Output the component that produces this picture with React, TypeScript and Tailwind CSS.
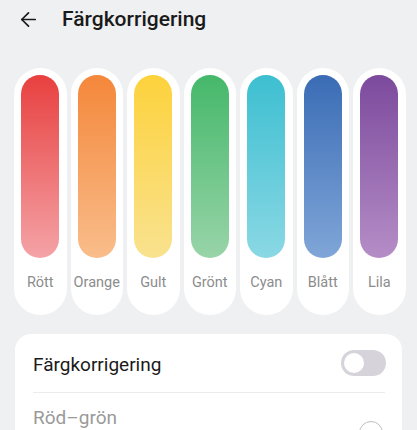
import { ArrowLeft } from "lucide-react";

const colors = [
  { name: "Rött", from: "#e8403f", to: "#f4a3a7" },
  { name: "Orange", from: "#f4873a", to: "#f9bd8b" },
  { name: "Gult", from: "#fdd23c", to: "#f9e28f" },
  { name: "Grönt", from: "#45b86a", to: "#98d4a9" },
  { name: "Cyan", from: "#3dbfd1", to: "#8ad8e4" },
  { name: "Blått", from: "#3a6cb5", to: "#80a6d8" },
  { name: "Lila", from: "#7c4a9d", to: "#b58dc6" },
];

export default function App() {
  return (
    <div
      className="w-[417px] h-[430px] overflow-hidden bg-[#eef0f2]"
      style={{ fontFamily: "Roboto, 'Noto Sans', sans-serif" }}
    >
      <header className="flex items-center h-[38px] pl-[17px] pt-[1px]">
        <ArrowLeft className="w-[23px] h-[23px] text-[#1a1a1a]" strokeWidth={1.8} />
        <h1 className="ml-[22px] text-[21px] font-medium text-[#1a1a1a]">
          Färgkorrigering
        </h1>
      </header>

      <div className="flex gap-[4px] pl-[14px] mt-[30px]">
        {colors.map((c) => (
          <div
            key={c.name}
            className="w-[52.5px] h-[247px] bg-white rounded-full flex flex-col items-center pt-[7px]"
          >
            <div
              className="w-[38px] h-[183px] rounded-full"
              style={{ background: `linear-gradient(to bottom, ${c.from}, ${c.to})` }}
            />
            <span className="mt-[14px] text-[14.5px] text-[#8c8c8c]">{c.name}</span>
          </div>
        ))}
      </div>

      <div className="mx-[15px] mt-[19px] bg-white rounded-[16px] pl-[18px] pr-[17px]">
        <div className="flex items-center justify-between h-[59px] border-b border-[#ececec]">
          <span className="text-[19px] text-[#1a1a1a] mt-[4px]">Färgkorrigering</span>
          <div className="w-[45px] h-[26px] rounded-full bg-[#d6d4da] p-[3px] mr-[-1px]">
            <div className="w-[20px] h-[20px] rounded-full bg-white" />
          </div>
        </div>
        <div className="flex items-center justify-between h-[52px]">
          <span className="text-[19px] text-[#9a9a9a] mt-[-2px]">Röd–grön</span>
          <div className="w-[24px] h-[24px] rounded-full border-[1.5px] border-[#bdbdbd] mt-[28px] mr-[2px]" />
        </div>
      </div>
    </div>
  );
}
